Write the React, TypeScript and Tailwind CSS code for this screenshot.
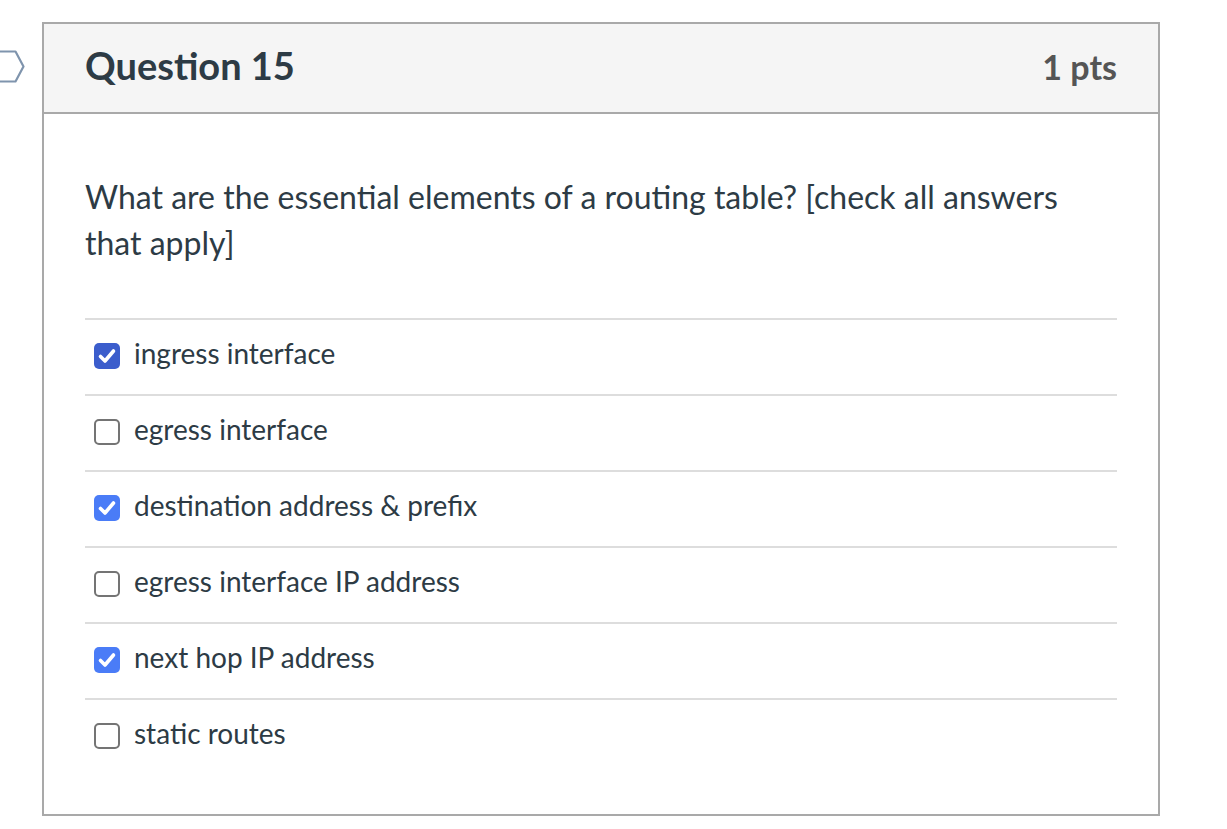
const answers = [
  { label: 'ingress interface', checked: true, focused: true },
  { label: 'egress interface', checked: false },
  { label: 'destination address & prefix', checked: true },
  { label: 'egress interface IP address', checked: false },
  { label: 'next hop IP address', checked: true },
  { label: 'static routes', checked: false },
];

function Box({ checked, focused }: { checked: boolean; focused?: boolean }) {
  if (!checked) {
    return <span className="mt-[23px] w-[26px] h-[26px] shrink-0 rounded-[5px] border-2 border-[#747474] bg-white" />;
  }
  return (
    <span
      className={
        focused
          ? 'mt-[23px] w-[26px] h-[26px] shrink-0 rounded-[5px] bg-[#3b5dcc] flex items-center justify-center'
          : 'mt-[23px] w-[26px] h-[26px] shrink-0 rounded-[5px] bg-[#4a7cf7] flex items-center justify-center'
      }
    >
      <svg width="26" height="26" viewBox="0 0 26 26" fill="none">
        <path d="M6.5 13.5 L11 18 L19.5 8" stroke="white" strokeWidth="3.6" strokeLinecap="round" strokeLinejoin="round" />
      </svg>
    </span>
  );
}

export default function App() {
  return (
    <div className="min-h-screen bg-white flex pt-[22px] font-['Lato',sans-serif] text-[#2d3b45]">
      <div className="w-[42px] shrink-0 pt-[28px]">
        <svg width="26" height="34" viewBox="0 0 26 34" fill="none">
          <path d="M-4 1.5 H15.5 L23.5 16.5 L15.5 31.5 H-4" stroke="#7f94ad" strokeWidth="2.2" strokeLinejoin="round" />
        </svg>
      </div>

      <div className="w-[1118px] h-[794px] border-2 border-[#a9a9a9] flex flex-col">
        <div className="h-[90px] bg-[#f5f5f5] border-b-2 border-[#a9a9a9] px-[41px] pt-[22px] flex items-baseline justify-between">
          <h2 className="text-[38px] font-bold leading-none">Question 15</h2>
          <span className="text-[34px] font-bold leading-none text-[#555555]">1 pts</span>
        </div>

        <div className="px-[41px] pt-[60px]">
          <p className="text-[32px] leading-[46px]">
            What are the essential elements of a routing table? [check all answers that apply]
          </p>

          <div className="mt-[52px]">
            {answers.map((a, i) => (
              <div
                key={i}
                className="h-[76px] border-t-2 border-[#dddddd] flex items-start pl-[9px] gap-[14px]"
              >
                <Box checked={a.checked} focused={a.focused} />
                <span className="mt-[19px] text-[28px] leading-[28px]">{a.label}</span>
              </div>
            ))}
          </div>
        </div>
      </div>
    </div>
  );
}
